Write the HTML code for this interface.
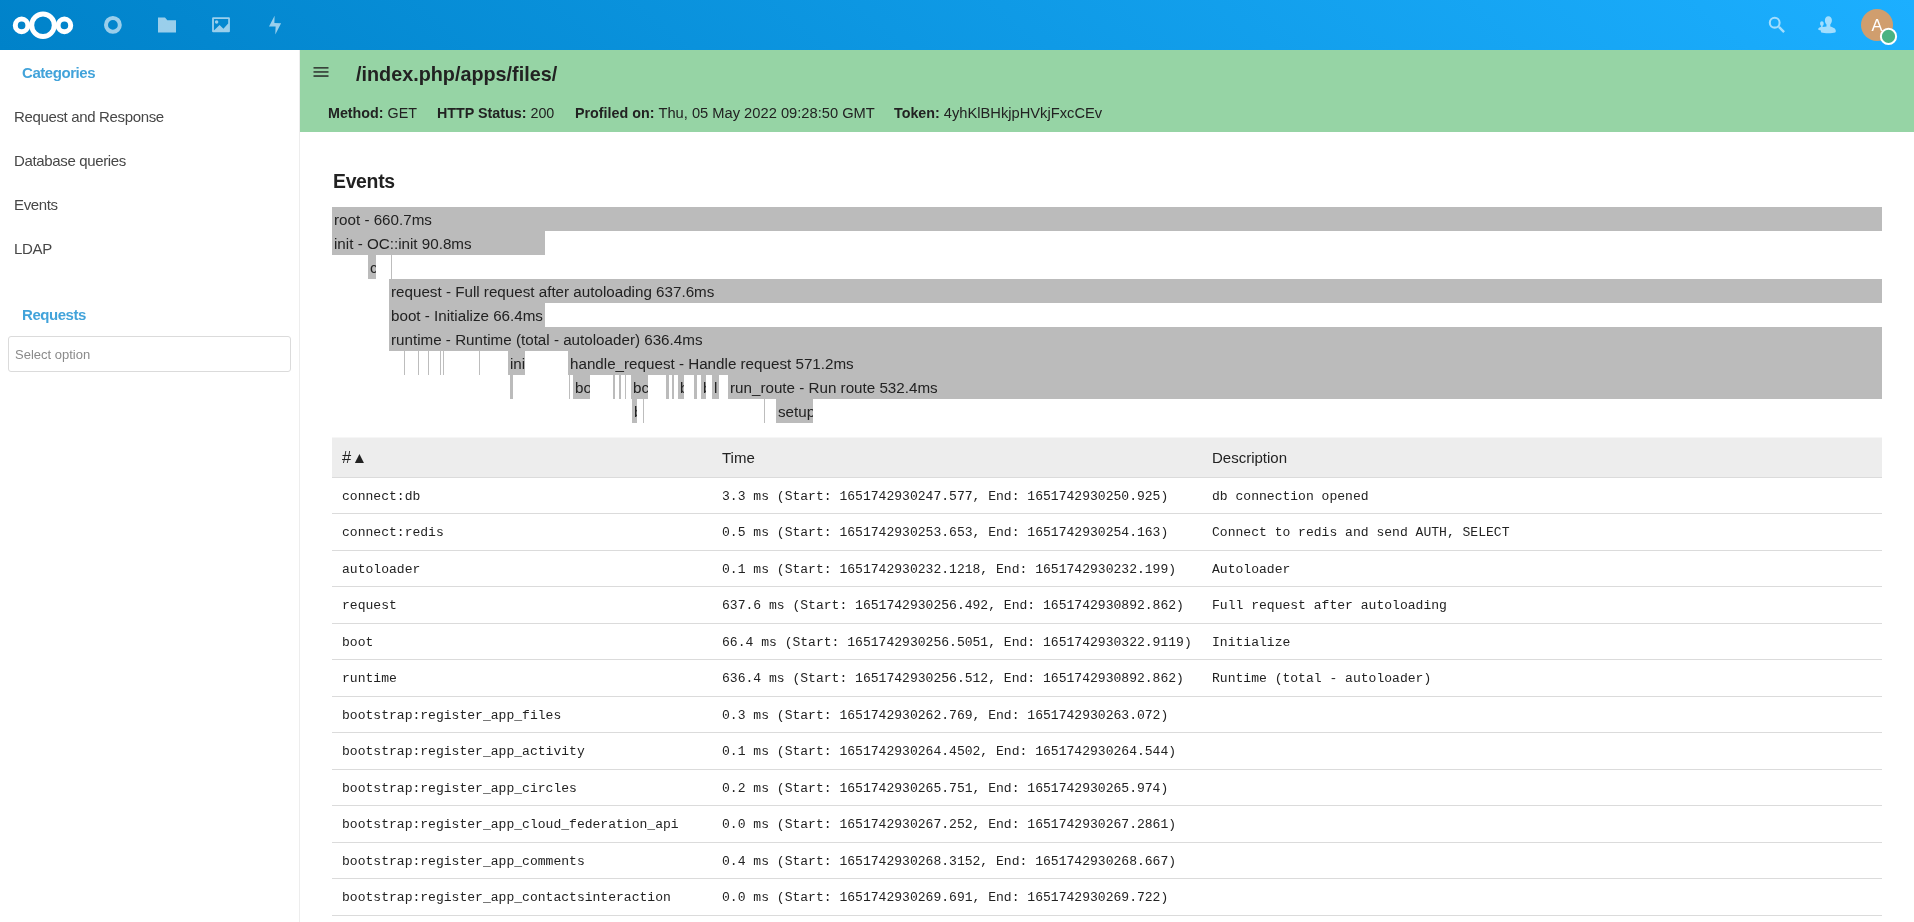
<!DOCTYPE html>
<html><head><meta charset="utf-8">
<style>
html,body{margin:0;padding:0;}
body{will-change:transform;}
body{width:1914px;height:922px;overflow:hidden;position:relative;background:#fff;font-family:"Liberation Sans",sans-serif;color:#222;}
.abs{position:absolute;}
#hdr{position:absolute;left:0;top:0;width:1914px;height:50px;background-color:#0082c9;background-image:linear-gradient(40deg,#0082c9 0%,#1cafff 100%);}
#hdr svg{position:absolute;left:0;top:0;}
#side{position:absolute;left:0;top:50px;width:299px;height:872px;border-right:1px solid #ededed;background:#fff;}
.cap{position:absolute;left:22px;font-weight:700;color:#42a3da;font-size:15px;letter-spacing:-0.45px;white-space:nowrap;}
.nav{position:absolute;left:14px;font-size:15px;letter-spacing:-0.35px;color:#474747;white-space:nowrap;}
#sel{position:absolute;left:8px;top:286px;width:281px;height:34px;border:1px solid #dbdbdb;border-radius:3px;}
#sel span{position:absolute;left:6px;top:10px;font-size:13px;color:#8a8a8a;white-space:nowrap;}
#green{position:absolute;left:300px;top:50px;width:1614px;height:82px;background:#96d4a5;}
#green .t{position:absolute;left:56px;top:13px;font-size:19.8px;font-weight:700;color:#222;white-space:nowrap;}
#green .m{position:absolute;top:54.5px;font-size:14.3px;color:#222;white-space:nowrap;}
#green .m b{font-weight:700;}
h2{position:absolute;left:333px;top:169.6px;margin:0;font-size:19.4px;letter-spacing:-0.3px;font-weight:700;color:#222;white-space:nowrap;}
.bar{position:absolute;height:24px;background:#bbb;overflow:hidden;white-space:nowrap;font-size:15.2px;line-height:24px;color:#222;}
.bar span{position:absolute;left:2px;top:0.5px;}
.ln{position:absolute;height:24px;width:1px;background:#bdbdbd;}
#tbl{position:absolute;left:332px;top:437.9px;width:1550px;}
.th{position:relative;height:40px;box-sizing:border-box;background:#ededed;box-shadow:0 -1px 0 #f6f6f6;border-bottom:1px solid #dbdbdb;font-size:15px;}
.tr{position:relative;height:36.5px;box-sizing:border-box;border-bottom:1px solid #dbdbdb;font-family:"Liberation Mono",monospace;font-size:13.05px;}
.c1,.c2,.c3{position:absolute;white-space:nowrap;}
.c1{left:10px;}.c2{left:390px;}.c3{left:880px;}
.th .c1,.th .c2,.th .c3{top:11px;}
.tr .c1,.tr .c2,.tr .c3{top:11px;}
</style></head><body>
<div id="hdr">
<svg width="1914" height="50" viewBox="0 0 1914 50">
  <g fill="none" stroke="#fff">
    <circle cx="21.6" cy="25.4" r="6.3" stroke-width="5"/>
    <circle cx="43" cy="25.3" r="11.25" stroke-width="4.9"/>
    <circle cx="64.4" cy="25.4" r="6.3" stroke-width="5"/>
  </g>
  <g fill="#fff" opacity="0.6">
    <circle cx="112.9" cy="24.9" r="6.9" fill="none" stroke="#fff" stroke-width="4"/>
    <path d="M158 17.6 H165 L167.3 20.2 H176 V32.5 H158 Z"/>
    <path fill-rule="evenodd" d="M213.1 17.2 H228.9 Q229.9 17.2 229.9 18.2 V31.3 Q229.9 32.3 228.9 32.3 H213.1 Q212.1 32.3 212.1 31.3 V18.2 Q212.1 17.2 213.1 17.2 Z M213.9 19 V30.5 L219.6 25.1 L223.4 28.7 L228.2 23.6 V19 Z"/>
    <circle cx="216.6" cy="21.9" r="1.75"/>
    <path d="M274.6 15.7 L274.4 23 L281.1 23.2 L275.3 34.4 L275.6 26.6 L269 26.5 Z"/>
  </g>
  <g fill="none" stroke="#fff" opacity="0.6">
    <circle cx="1774.7" cy="22.7" r="4.9" stroke-width="2.05"/>
    <path d="M1778.9 26.9 L1784.1 32.1" stroke-width="2.4"/>
  </g>
  <g fill="#fff" opacity="0.6">
    <path d="M1828.4 16.2 C1830.6 16.2 1831.9 18 1831.9 20.3 C1831.9 22.3 1831 23.8 1830.3 24.6 L1830.3 26.6 C1832.5 27.3 1834.5 28 1835.3 29.3 C1836 30.5 1836 32 1835.2 32.6 C1832.5 33.6 1824 33.6 1821.4 32.6 C1820.9 32.2 1820.8 31.3 1820.9 30.4 C1819.5 30.3 1818 29.9 1818.2 28.9 C1818.4 27.9 1819.5 27.4 1821 27.1 L1821.2 25.8 C1820.4 25.3 1820.1 24.4 1820.1 23.4 C1820.1 22.2 1820.9 21.3 1821.9 21.3 C1822.9 21.3 1823.7 22.2 1823.7 23.4 C1823.7 24.4 1823.3 25.3 1822.6 25.8 L1822.7 27 C1824.2 26.9 1825.5 26.8 1826.5 26.6 L1826.5 24.6 C1825.6 23.8 1824.9 22.3 1824.9 20.3 C1824.9 18 1826.2 16.2 1828.4 16.2 Z"/>
  </g>
  <circle cx="1877" cy="25" r="16" fill="#d09e6e"/>
  <text x="1877" y="31" text-anchor="middle" font-family="Liberation Sans" font-size="16.5" fill="#fff">A</text>
  <circle cx="1888.5" cy="36.4" r="7.6" fill="#49b382" stroke="#fff" stroke-width="2"/>
</svg>
</div>

<div id="side">
  <div class="cap" style="top:13.9px">Categories</div>
  <div class="nav" style="top:57.6px">Request and Response</div>
  <div class="nav" style="top:101.5px">Database queries</div>
  <div class="nav" style="top:145.5px">Events</div>
  <div class="nav" style="top:189.5px">LDAP</div>
  <div class="cap" style="top:256px">Requests</div>
  <div id="sel"><span>Select option</span></div>
</div>

<div id="green">
  <svg class="abs" style="left:0;top:0" width="40" height="40">
    <g fill="#222" opacity="0.85">
      <rect x="13.5" y="17.05" width="15" height="1.6"/>
      <rect x="13.5" y="21.15" width="15" height="1.6"/>
      <rect x="13.5" y="25.2" width="15" height="1.7"/>
    </g>
  </svg>
  <div class="t">/index.php/apps/files/</div>
  <div class="m" style="left:28px"><b>Method:</b> GET</div>
  <div class="m" style="left:137px"><b>HTTP Status:</b> 200</div>
  <div class="m" style="left:275px"><b>Profiled on:</b> <span style="font-size:14.7px">Thu, 05 May 2022 09:28:50 GMT</span></div>
  <div class="m" style="left:594px"><b>Token:</b> <span style="font-size:14.7px">4yhKlBHkjpHVkjFxcCEv</span></div>
</div>

<h2>Events</h2>

<!-- flame graph -->
<div class="bar" style="left:332px;top:207px;width:1550px"><span>root - 660.7ms</span></div>
<div class="bar" style="left:332px;top:231px;width:213px"><span>init - OC::init 90.8ms</span></div>
<div class="bar" style="left:368px;top:255px;width:8px"><span>connect:db</span></div>
<div class="ln" style="left:391px;top:255px"></div>
<div class="bar" style="left:389px;top:279px;width:1493px"><span>request - Full request after autoloading 637.6ms</span></div>
<div class="bar" style="left:389px;top:303px;width:156px"><span>boot - Initialize 66.4ms</span></div>
<div class="bar" style="left:389px;top:327px;width:1493px"><span>runtime - Runtime (total - autoloader) 636.4ms</span></div>
<div class="ln" style="left:404px;top:351px"></div>
<div class="ln" style="left:418px;top:351px"></div>
<div class="ln" style="left:428px;top:351px"></div>
<div class="ln" style="left:440px;top:351px"></div>
<div class="ln" style="left:443px;top:351px"></div>
<div class="ln" style="left:479px;top:351px"></div>
<div class="bar" style="left:508px;top:351px;width:17px"><span>init</span></div>
<div class="bar" style="left:568px;top:351px;width:1314px"><span>handle_request - Handle request 571.2ms</span></div>
<div class="bar" style="left:510px;top:375px;width:3px"></div>
<div class="ln" style="left:569px;top:375px"></div>
<div class="bar" style="left:573px;top:375px;width:17px"><span>boot</span></div>
<div class="bar" style="left:613px;top:375px;width:2px"></div>
<div class="bar" style="left:619px;top:375px;width:2px"></div>
<div class="ln" style="left:625px;top:375px"></div>
<div class="bar" style="left:631px;top:375px;width:17px"><span>bc</span></div>
<div class="bar" style="left:666px;top:375px;width:3px"></div>
<div class="bar" style="left:672px;top:375px;width:2px"></div>
<div class="bar" style="left:678px;top:375px;width:6px"><span>b</span></div>
<div class="bar" style="left:694px;top:375px;width:3px"></div>
<div class="bar" style="left:701px;top:375px;width:5px"><span>b</span></div>
<div class="bar" style="left:712px;top:375px;width:7px"><span>l</span></div>
<div class="bar" style="left:728px;top:375px;width:1154px"><span>run_route - Run route 532.4ms</span></div>
<div class="bar" style="left:632px;top:399px;width:5px"><span>b</span></div>
<div class="ln" style="left:643px;top:399px"></div>
<div class="ln" style="left:764px;top:399px"></div>
<div class="bar" style="left:776px;top:399px;width:37px"><span>setup</span></div>

<div id="tbl">
  <div class="th"><span class="c1" style="top:10px"><span style="font-size:16.5px">#</span><span style="position:relative;left:0.5px;top:0.5px;font-size:15.5px">&#9650;</span></span><span class="c2">Time</span><span class="c3">Description</span></div>
  <div class="tr"><span class="c1">connect:db</span><span class="c2">3.3 ms (Start: 1651742930247.577, End: 1651742930250.925)</span><span class="c3">db connection opened</span></div>
  <div class="tr"><span class="c1">connect:redis</span><span class="c2">0.5 ms (Start: 1651742930253.653, End: 1651742930254.163)</span><span class="c3">Connect to redis and send AUTH, SELECT</span></div>
  <div class="tr"><span class="c1">autoloader</span><span class="c2">0.1 ms (Start: 1651742930232.1218, End: 1651742930232.199)</span><span class="c3">Autoloader</span></div>
  <div class="tr"><span class="c1">request</span><span class="c2">637.6 ms (Start: 1651742930256.492, End: 1651742930892.862)</span><span class="c3">Full request after autoloading</span></div>
  <div class="tr"><span class="c1">boot</span><span class="c2">66.4 ms (Start: 1651742930256.5051, End: 1651742930322.9119)</span><span class="c3">Initialize</span></div>
  <div class="tr"><span class="c1">runtime</span><span class="c2">636.4 ms (Start: 1651742930256.512, End: 1651742930892.862)</span><span class="c3">Runtime (total - autoloader)</span></div>
  <div class="tr"><span class="c1">bootstrap:register_app_files</span><span class="c2">0.3 ms (Start: 1651742930262.769, End: 1651742930263.072)</span><span class="c3"></span></div>
  <div class="tr"><span class="c1">bootstrap:register_app_activity</span><span class="c2">0.1 ms (Start: 1651742930264.4502, End: 1651742930264.544)</span><span class="c3"></span></div>
  <div class="tr"><span class="c1">bootstrap:register_app_circles</span><span class="c2">0.2 ms (Start: 1651742930265.751, End: 1651742930265.974)</span><span class="c3"></span></div>
  <div class="tr"><span class="c1">bootstrap:register_app_cloud_federation_api</span><span class="c2">0.0 ms (Start: 1651742930267.252, End: 1651742930267.2861)</span><span class="c3"></span></div>
  <div class="tr"><span class="c1">bootstrap:register_app_comments</span><span class="c2">0.4 ms (Start: 1651742930268.3152, End: 1651742930268.667)</span><span class="c3"></span></div>
  <div class="tr"><span class="c1">bootstrap:register_app_contactsinteraction</span><span class="c2">0.0 ms (Start: 1651742930269.691, End: 1651742930269.722)</span><span class="c3"></span></div>
  <div class="tr"><span class="c1">bootstrap:register_app_dav</span><span class="c2"></span><span class="c3"></span></div>
</div>
</body></html>
